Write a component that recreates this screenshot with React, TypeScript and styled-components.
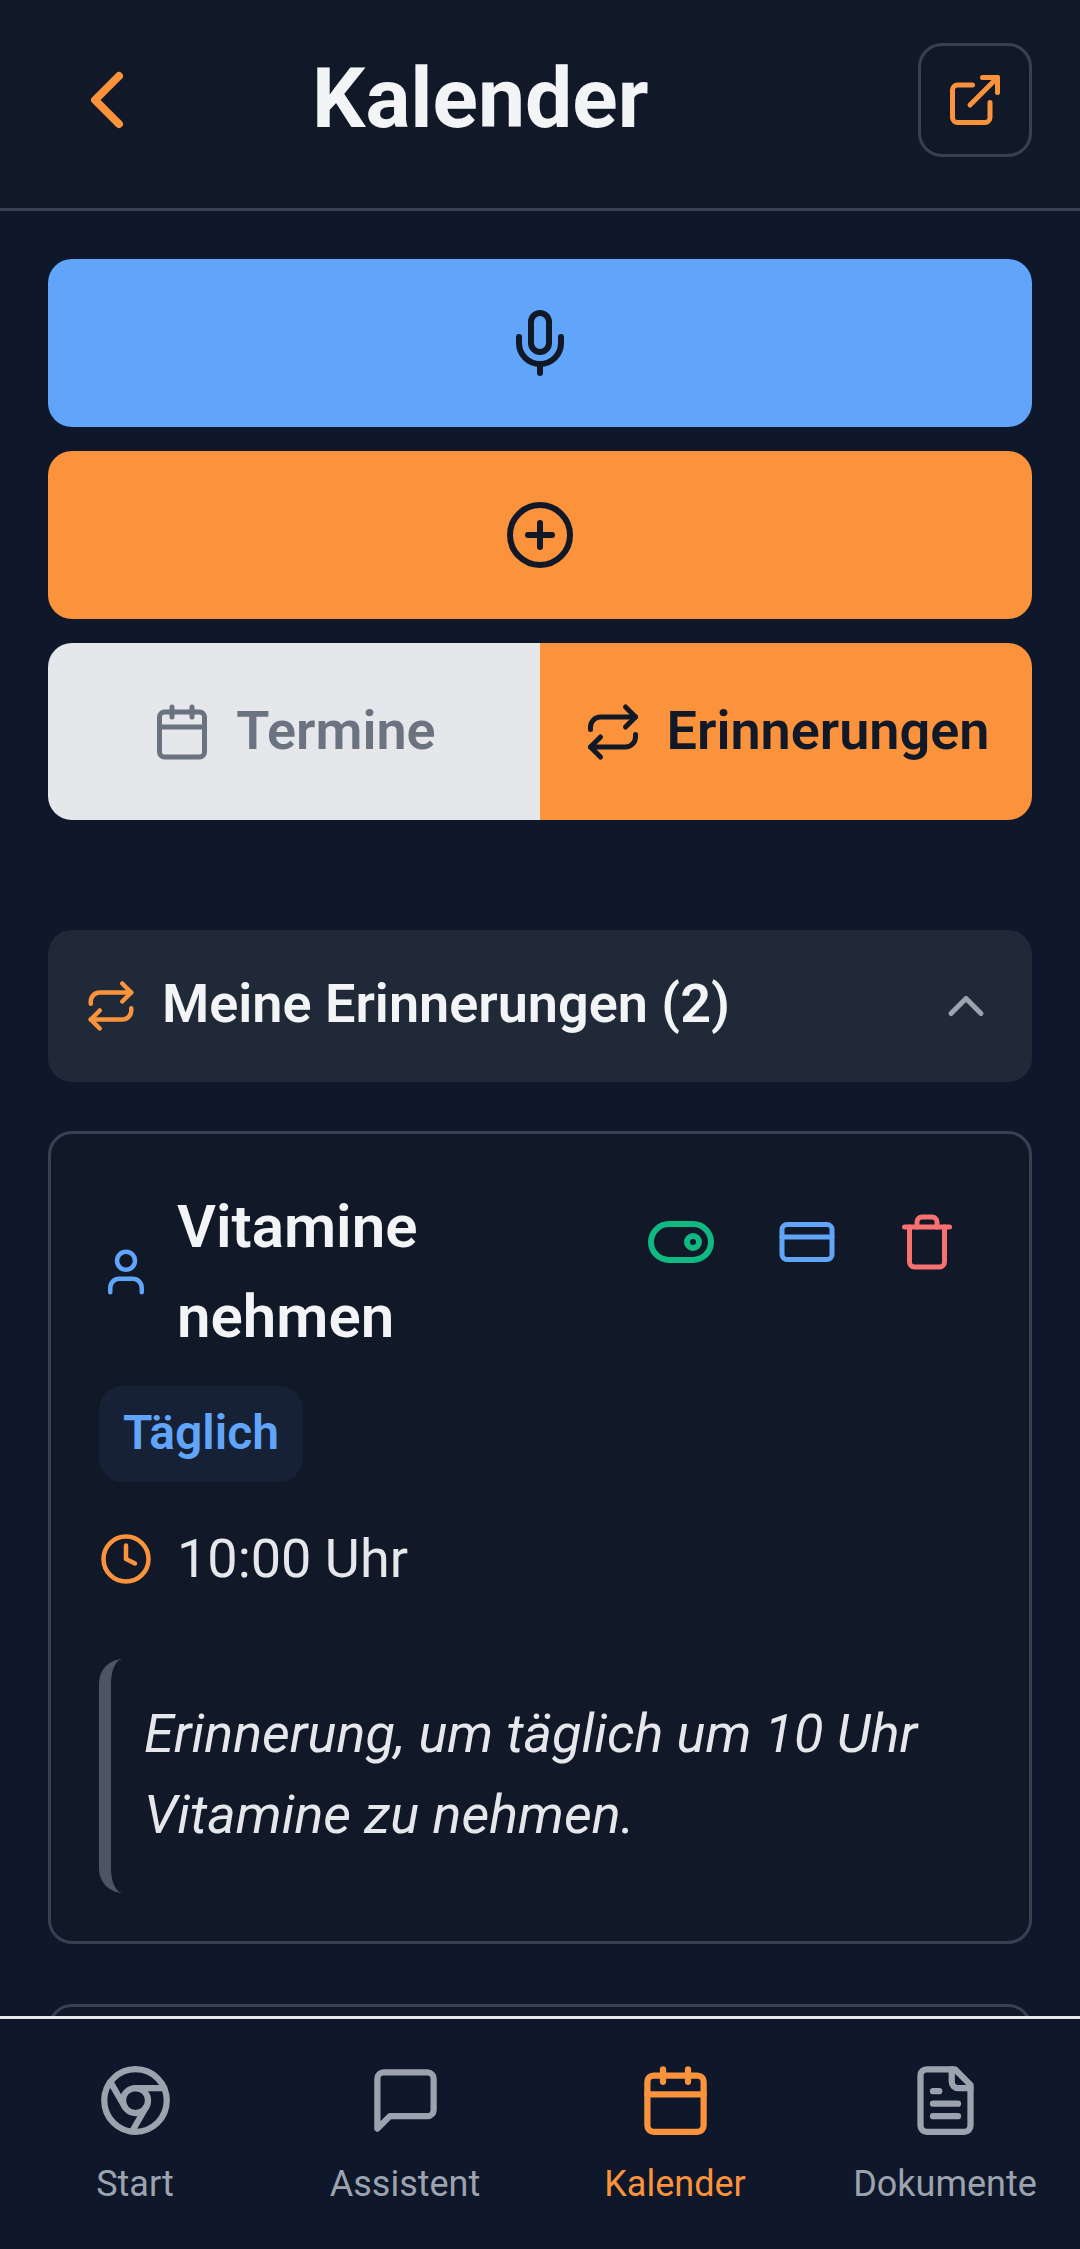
import React from 'react';
import styled, { createGlobalStyle } from 'styled-components';
import {
  Calendar,
  ChevronLeft,
  ChevronUp,
  CirclePlus,
  Clock,
  CreditCard,
  ExternalLink,
  Mic,
  Repeat,
  Trash,
  User,
} from 'lucide-react';

const GlobalStyle = createGlobalStyle`
  html, body {
    margin: 0;
    padding: 0;
    background: #0f172a;
    font-family: Roboto, "Noto Sans", sans-serif;
  }
  * { box-sizing: border-box; }
  svg { flex-shrink: 0; }
`;

const Screen = styled.div`
  position: relative;
  width: 1080px;
  height: 2249px;
  overflow: hidden;
  background: #0f172a;
`;

const Header = styled.header`
  display: flex;
  align-items: center;
  height: 211px;
  padding: 0 48px 8px 59px;
  background: #111827;
  border-bottom: 3px solid #374151;
`;

const Title = styled.h1`
  margin: 0 0 3px 157px;
  font-size: 84px;
  font-weight: 700;
  line-height: 1;
  color: #f3f4f6;
`;

const ShareButton = styled.button`
  display: flex;
  align-items: center;
  justify-content: center;
  width: 114px;
  height: 114px;
  margin-left: auto;
  padding: 0;
  background: none;
  border: 3px solid #374151;
  border-radius: 24px;
`;

const Main = styled.main`
  display: flex;
  flex-direction: column;
  padding: 48px 48px 0;
`;

const ActionButton = styled.button<{ $color: string }>`
  display: flex;
  align-items: center;
  justify-content: center;
  height: 168px;
  margin-bottom: 24px;
  padding: 0;
  background: ${props => props.$color};
  border: none;
  border-radius: 24px;
`;

const Tabs = styled.div`
  display: flex;
  height: 177px;
  border-radius: 24px;
  overflow: hidden;
  margin-bottom: 110px;
`;

const Tab = styled.button<{ $active?: boolean }>`
  flex: 1;
  display: flex;
  align-items: center;
  justify-content: center;
  gap: 24px;
  padding: 0;
  border: none;
  font-family: inherit;
  font-size: 54px;
  font-weight: 600;
  background: ${props => (props.$active ? '#fb923c' : '#e5e7eb')};
  color: ${props => (props.$active ? '#111827' : '#6b7280')};
`;

const TabLabel = styled.span`
  padding-bottom: 3px;
`;

const SectionHeader = styled.div`
  display: flex;
  align-items: center;
  height: 152px;
  padding: 0 36px;
  margin-bottom: 49px;
  background: #1f2937;
  border-radius: 24px;
`;

const SectionTitle = styled.span`
  flex: 1;
  margin-left: 24px;
  padding-bottom: 5px;
  font-size: 54px;
  font-weight: 600;
  color: #f3f4f6;
`;

const Card = styled.section`
  padding: 48px;
  margin-bottom: 60px;
  background: #111827;
  border: 3px solid #374151;
  border-radius: 24px;
`;

const CardTop = styled.div`
  display: flex;
  align-items: flex-start;
  margin-bottom: 24px;
`;

const CardName = styled.div`
  flex: 1;
  display: flex;
  align-items: center;
  gap: 24px;
`;

const CardTitle = styled.h2`
  margin: 0;
  font-size: 60px;
  font-weight: 600;
  line-height: 90px;
  color: #f3f4f6;
`;

const CardActions = styled.div`
  display: flex;
  gap: 12px;
`;

const IconButton = styled.button`
  display: flex;
  align-items: center;
  justify-content: center;
  height: 120px;
  padding: 0 24px;
  background: none;
  border: none;
`;

const Pill = styled.span`
  display: block;
  width: fit-content;
  height: 96px;
  padding: 0 24px;
  background: #172136;
  border-radius: 24px;
  font-size: 48px;
  font-weight: 600;
  line-height: 93px;
  color: #60a5fa;
`;

const TimeRow = styled.div`
  display: flex;
  align-items: center;
  gap: 24px;
  height: 81px;
  margin: 36px 0 60px;
  font-size: 54px;
  color: #e5e7eb;
`;

const Note = styled.p`
  margin: 0;
  padding: 34px 0 38px 33px;
  border-left: 12px solid #4b5563;
  border-radius: 24px;
  font-size: 54px;
  font-style: italic;
  line-height: 81px;
  color: #e5e7eb;
`;

const NextCard = styled(Card)`
  height: 400px;
`;

const BottomNav = styled.nav`
  position: absolute;
  left: 0;
  right: 0;
  bottom: 0;
  display: flex;
  height: 233px;
  background: #0f172a;
  border-top: 3px solid #e5e7eb;
`;

const NavItem = styled.div<{ $active?: boolean }>`
  flex: 1;
  display: flex;
  flex-direction: column;
  align-items: center;
  padding-top: 44px;
  gap: 19px;
  font-size: 36px;
  line-height: 54px;
  color: ${props => (props.$active ? '#fb923c' : '#9ca3af')};
`;

const Line: React.FC<{ size: number; color?: string; children: React.ReactNode }> = ({
  size,
  color = 'currentColor',
  children,
}) => (
  <svg
    width={size}
    height={size}
    viewBox="0 0 24 24"
    fill="none"
    stroke={color}
    strokeWidth={2}
    strokeLinecap="round"
    strokeLinejoin="round"
  >
    {children}
  </svg>
);

const ToggleIcon = () => (
  <Line size={72} color="#10b981">
    <rect x="2" y="6" width="20" height="12" rx="6" />
    <circle cx="16" cy="12" r="2" />
  </Line>
);

const ChromeIcon = () => (
  <Line size={75}>
    <circle cx="12" cy="12" r="10" />
    <circle cx="12" cy="12" r="4" />
    <path d="M21.17 8H12" />
    <path d="M3.95 6.06 8.54 14" />
    <path d="M10.88 21.94 15.46 14" />
  </Line>
);

const MessageIcon = () => (
  <Line size={75}>
    <path d="M21 15a2 2 0 0 1-2 2H7l-4 4V5a2 2 0 0 1 2-2h14a2 2 0 0 1 2 2z" />
  </Line>
);

const CalendarIcon = () => (
  <Line size={75}>
    <path d="M8 2v4" />
    <path d="M16 2v4" />
    <rect x="3" y="4" width="18" height="18" rx="2" />
    <path d="M3 10h18" />
  </Line>
);

const DocumentIcon = () => (
  <Line size={75}>
    <path d="M15 2H6a2 2 0 0 0-2 2v16a2 2 0 0 0 2 2h12a2 2 0 0 0 2-2V7Z" />
    <path d="M14 2v4a2 2 0 0 0 2 2h4" />
    <path d="M10 9H8" />
    <path d="M16 13H8" />
    <path d="M16 17H8" />
  </Line>
);

const navItems = [
  { label: 'Start', icon: ChromeIcon },
  { label: 'Assistent', icon: MessageIcon },
  { label: 'Kalender', icon: CalendarIcon, active: true },
  { label: 'Dokumente', icon: DocumentIcon },
];

const App: React.FC = () => (
  <Screen>
    <GlobalStyle />
    <Header>
      <ChevronLeft size={96} color="#fb923c" strokeWidth={2} />
      <Title>Kalender</Title>
      <ShareButton>
        <ExternalLink size={60} color="#fb923c" strokeWidth={2} />
      </ShareButton>
    </Header>
    <Main>
      <ActionButton $color="#60a5fa">
        <Mic size={72} color="#111827" strokeWidth={2} />
      </ActionButton>
      <ActionButton $color="#fb923c">
        <CirclePlus size={72} color="#111827" strokeWidth={2} />
      </ActionButton>
      <Tabs>
        <Tab>
          <Calendar size={60} strokeWidth={2} />
          <TabLabel>Termine</TabLabel>
        </Tab>
        <Tab $active>
          <Repeat size={60} strokeWidth={2} />
          <TabLabel>Erinnerungen</TabLabel>
        </Tab>
      </Tabs>
      <SectionHeader>
        <Repeat size={54} color="#fb923c" strokeWidth={2} />
        <SectionTitle>Meine Erinnerungen (2)</SectionTitle>
        <ChevronUp size={60} color="#9ca3af" strokeWidth={2} />
      </SectionHeader>
      <Card>
        <CardTop>
          <CardName>
            <User size={54} color="#60a5fa" strokeWidth={2} />
            <CardTitle>Vitamine nehmen</CardTitle>
          </CardName>
          <CardActions>
            <IconButton>
              <ToggleIcon />
            </IconButton>
            <IconButton>
              <CreditCard size={60} color="#60a5fa" strokeWidth={2} />
            </IconButton>
            <IconButton>
              <Trash size={60} color="#f87171" strokeWidth={2} />
            </IconButton>
          </CardActions>
        </CardTop>
        <Pill>Täglich</Pill>
        <TimeRow>
          <Clock size={54} color="#fb923c" strokeWidth={2} />
          10:00 Uhr
        </TimeRow>
        <Note>Erinnerung, um täglich um 10 Uhr Vitamine zu nehmen.</Note>
      </Card>
      <NextCard />
    </Main>
    <BottomNav>
      {navItems.map(({ label, icon: Icon, active }) => (
        <NavItem key={label} $active={active}>
          <Icon />
          {label}
        </NavItem>
      ))}
    </BottomNav>
  </Screen>
);

export default App;
